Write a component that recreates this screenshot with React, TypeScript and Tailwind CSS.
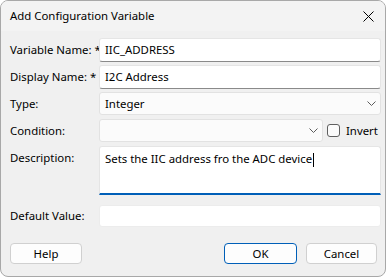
const FONT = "font-['Segoe_UI','Noto_Sans',sans-serif]";

function Chevron() {
  return (
    <svg width="9" height="5" viewBox="0 0 9 5" className="shrink-0">
      <path d="M0.5 0.5 L4.5 4.5 L8.5 0.5" fill="none" stroke="#5c5c5c" strokeWidth="1" />
    </svg>
  );
}

function Field({ value }: { value?: string }) {
  return (
    <div className="flex-1 h-[24px] bg-white border border-[#e5e5e5] border-b-[#8a8a8a] rounded-[3px] flex items-center px-[5px] text-[11.4px] text-black">
      {value}
    </div>
  );
}

function Combo({ value, w = "flex-1" }: { value?: string; w?: string }) {
  return (
    <div className={`${w} h-[23px] bg-[#fbfbfb] border border-[#e2e2e2] rounded-[3px] flex items-center justify-between pl-[5px] pr-[4px] text-[11.4px] text-black`}>
      <span>{value}</span>
      <Chevron />
    </div>
  );
}

function Row({ label, children, mt }: { label: string; children: React.ReactNode; mt: string }) {
  return (
    <div className={`flex items-center ${mt}`}>
      <div className="w-[89px] text-[11.4px] text-black whitespace-nowrap">{label}</div>
      {children}
    </div>
  );
}

export default function App() {
  return (
    <div className={`w-[386px] h-[277px] bg-white ${FONT}`}>
      <div className="w-full h-full rounded-[8px] border border-[#a8a8a8] bg-[#f0f0f0] overflow-hidden flex flex-col">
        <div className="h-[30px] bg-[#f3f3f3] flex items-center justify-between pl-[9px] pr-[11px] shrink-0">
          <span className="text-[11.4px] text-black">Add Configuration Variable</span>
          <svg width="11" height="11" viewBox="0 0 11 11">
            <path d="M0.5 0.5 L10.5 10.5 M10.5 0.5 L0.5 10.5" stroke="#000" strokeWidth="1" />
          </svg>
        </div>

        <div className="flex flex-col pl-[9px] pr-[4px]">
          <Row label="Variable Name: *" mt="mt-[7px]">
            <Field value="IIC_ADDRESS" />
          </Row>
          <Row label="Display Name: *" mt="mt-[3px]">
            <Field value="I2C Address" />
          </Row>
          <Row label="Type:" mt="mt-[3px]">
            <Combo value="Integer" />
          </Row>
          <Row label="Condition:" mt="mt-[4px]">
            <Combo w="w-[224px]" />
            <div className="ml-[4px] w-[13px] h-[13px] rounded-[3px] border border-[#5f5f5f] bg-[#fbfbfb]" />
            <span className="ml-[6px] text-[11.4px] text-black">Invert</span>
          </Row>
          <div className="flex items-start mt-[4px]">
            <div className="w-[89px] pt-[3px] text-[11.4px] text-black">Description:</div>
            <div className="flex-1 h-[49px] bg-white border border-[#e5e5e5] border-b-2 border-b-[#005fb8] rounded-t-[3px] px-[5px] pt-[3px] text-[11.4px] text-black">
              Sets the IIC address fro the ADC device
              <span className="inline-block w-px h-[14px] bg-black align-middle ml-px" />
            </div>
          </div>
          <Row label="Default Value:" mt="mt-[10px]">
            <div className="flex-1 h-[22px] bg-white border border-[#ececec] rounded-[3px]" />
          </Row>
          <div className="flex items-center mt-[16px]">
            <button className="w-[72px] h-[21px] bg-[#fdfdfd] border border-[#d0d0d0] rounded-[4px] text-[11.4px] text-black leading-none">
              Help
            </button>
            <div className="flex-1" />
            <button className="w-[73px] h-[21px] bg-[#fdfdfd] border border-[#005fb8] rounded-[4px] text-[11.4px] text-black leading-none">
              OK
            </button>
            <button className="ml-[9px] w-[71px] h-[21px] bg-[#fdfdfd] border border-[#d0d0d0] rounded-[4px] text-[11.4px] text-black leading-none mr-[4px]">
              Cancel
            </button>
          </div>
        </div>
      </div>
    </div>
  );
}
